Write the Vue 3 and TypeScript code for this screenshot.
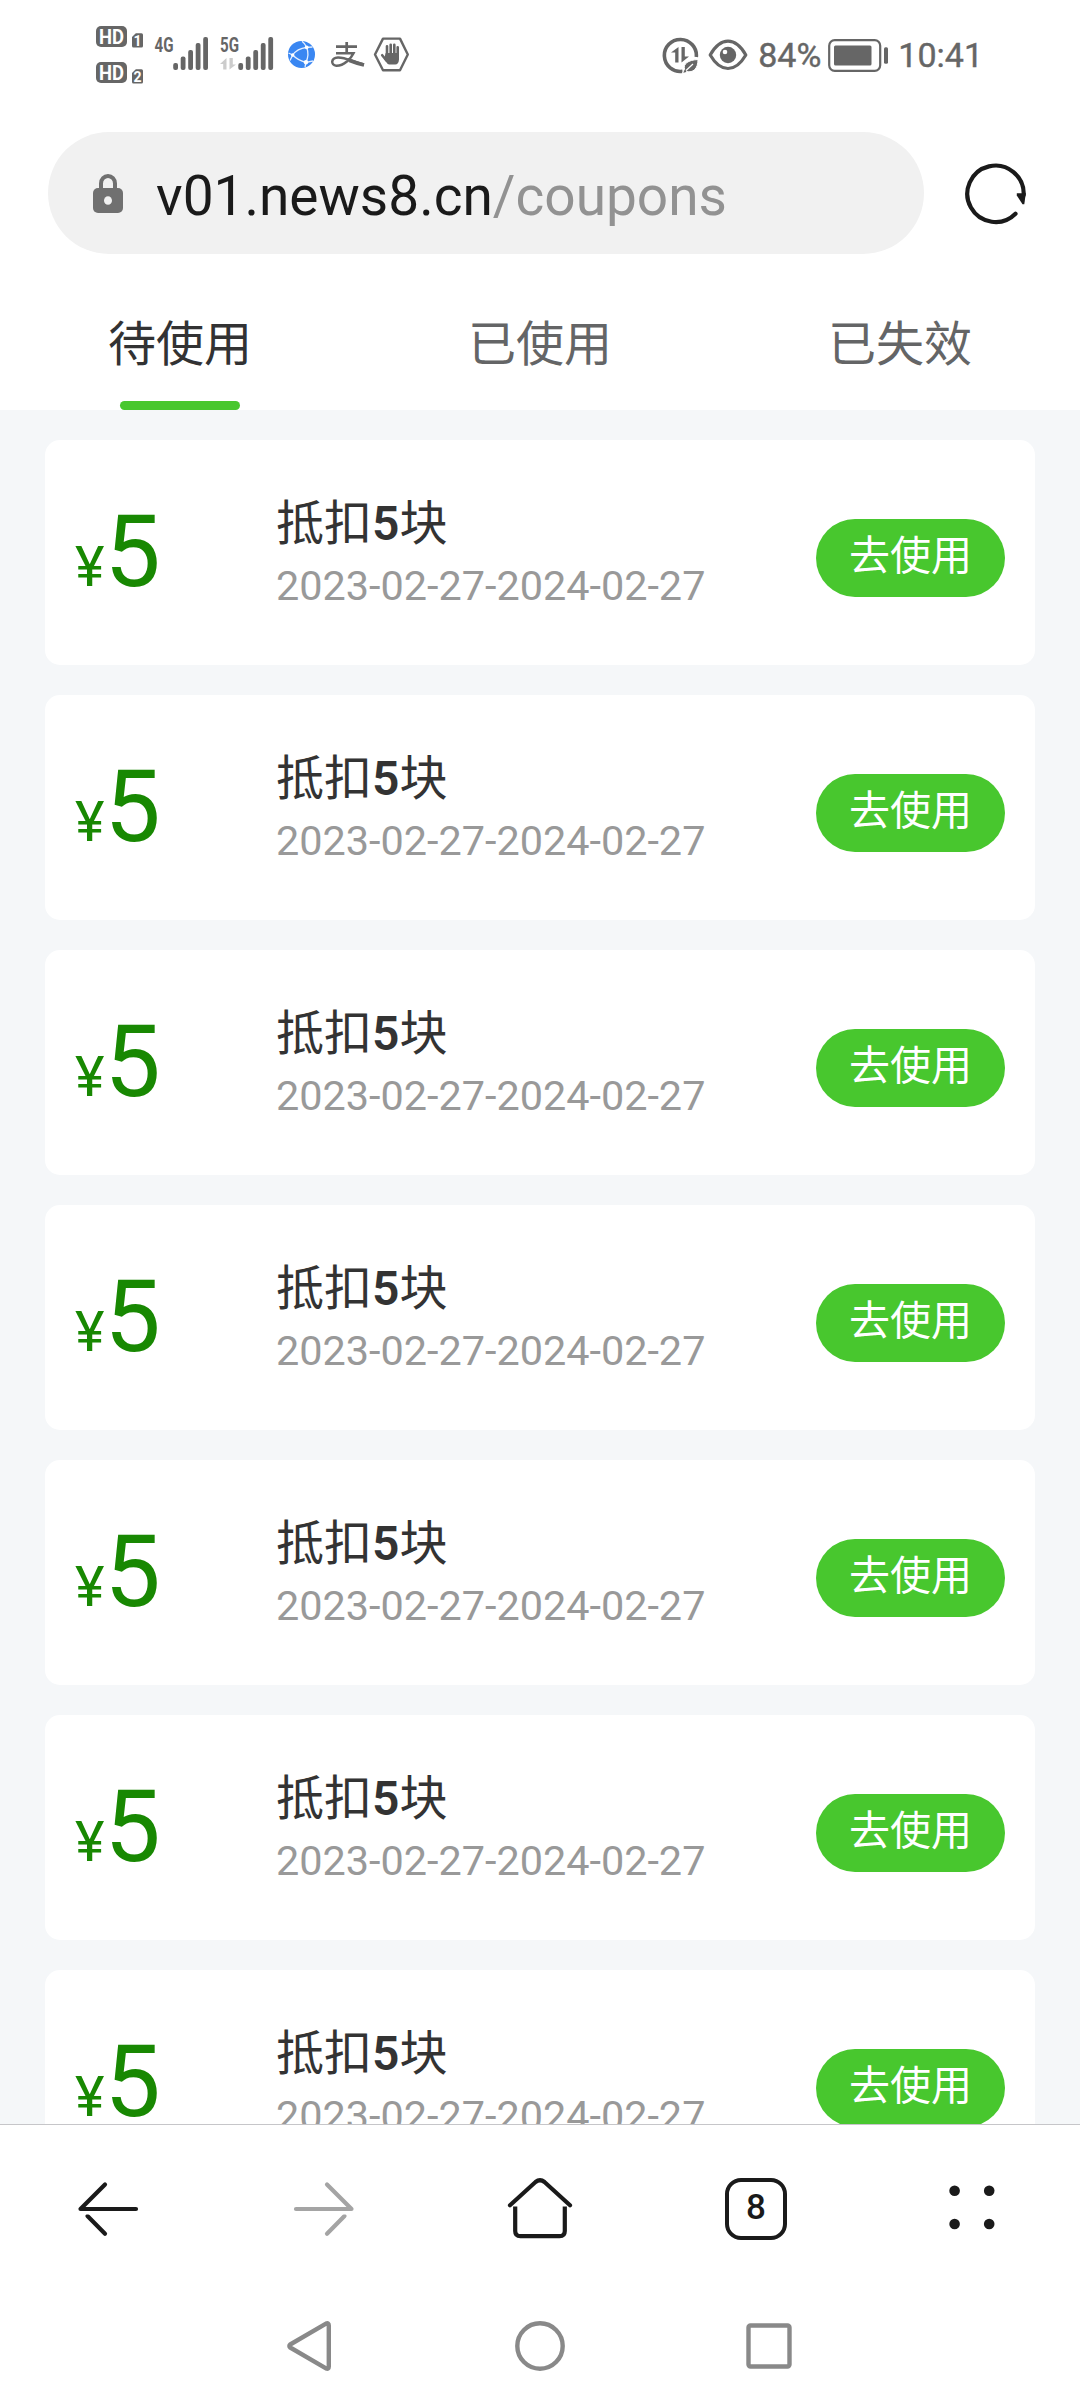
<script setup lang="ts">
interface Coupon {
  id: number
  amount: number
  title: string[]
  period: string
}

const tabs: string[] = ['待使用', '已使用', '已失效']
const activeTab = 0

const coupons: Coupon[] = Array.from({ length: 7 }, (_, i) => ({
  id: i,
  amount: 5,
  title: ['抵扣', '5', '块'],
  period: '2023-02-27-2024-02-27',
}))

// Signal bars: x offset and top edge of each bar
const bars = [
  { x: 0, y: 53 },
  { x: 7.5, y: 46.5 },
  { x: 15, y: 40 },
  { x: 22.5, y: 33 },
  { x: 30, y: 27 },
]
</script>

<template>
  <div class="screen">
    <header class="status">
      <svg class="status-left" width="340" height="90" viewBox="0 0 340 90">
        <g v-for="n in 2" :key="n" :transform="`translate(0 ${(n - 1) * 36})`">
          <rect x="16" y="16" width="31" height="21" rx="5" fill="#666" />
          <text x="19" y="33.5" class="hd" textLength="25" lengthAdjust="spacingAndGlyphs">HD</text>
          <path d="M53.5 37.5a1.500 1.500 0 0 1-1.500-1.500V27l3.800-3.800H61.500a1.500 1.500 0 0 1 1.500 1.500V36a1.500 1.500 0 0 1-1.500 1.500z" fill="#666" />
          <text x="57.5" y="35.7" class="sim">{{ n }}</text>
        </g>
        <text x="74.5" y="42" class="net" textLength="19" lengthAdjust="spacingAndGlyphs">4G</text>
        <text x="140" y="42" class="net" textLength="19" lengthAdjust="spacingAndGlyphs">5G</text>
        <g fill="#666">
          <rect v-for="b in bars" :key="'a' + b.x" :x="b.x + 93.2" :y="b.y" width="4.8" :height="60 - b.y" rx="2" />
          <rect v-for="b in bars" :key="'b' + b.x" :x="b.x + 158.3" :y="b.y" width="4.8" :height="60 - b.y" rx="2" />
        </g>
        <path d="M146.500 48v11.500h-3.300V54H140zM149.500 48v11.500l6.500-5h-3.200V48z" fill="#ccc" />

        <circle cx="221.500" cy="44.400" r="13.500" fill="#3a87f2" />
        <path d="M212.700 45Q217 38.500 226.700 37.300Q229.500 45 226 52.300Q218 50.500 212.700 45M226.700 37.300Q225 33.500 222 31.300M226.700 37.300L232.500 37M226 52.300L233 51M226 52.300L225 57M212.700 45L208.500 43M212.700 45L210 50.500" fill="none" stroke="#e6f0ff" stroke-width="1.300" />
        <g fill="#fff">
          <circle cx="226.700" cy="37.300" r="1.900" />
          <circle cx="212.700" cy="45" r="1.700" />
          <circle cx="226" cy="52.300" r="2.200" />
        </g>

        <g fill="none" stroke="#666">
          <path d="M256 36.700H277M266.700 32V43" stroke-width="2.700" />
          <path d="M256 43.200H273.500C271 48.500 264 56 256.300 55.800C250.500 55.200 250.700 47.700 258 47.400C266 47.300 273 52 284 54.500" stroke-width="2.500" />
          <path d="M269 50.300Q277 53.500 284 55" stroke-width="3.800" />
        </g>

        <path d="M303 28.600H320L327.800 44.500L320 60.200H303L295 44.500Z" fill="none" stroke="#666" stroke-width="2.400" stroke-linejoin="round" />
        <path d="M307 46V36.300M310.700 46V34.700M314.300 46V34.700M317.700 46V37.300M302.200 45.200l4 5" fill="none" stroke="#666" stroke-width="2.600" stroke-linecap="round" />
        <path d="M305.700 43H319V49.500Q318.600 54.500 315.200 54.500H309.200Q307.200 54 305.700 51.500L304 49z" fill="#666" />
      </svg>

      <div class="status-right">
        <svg width="37" height="37" viewBox="0 0 37 37">
          <path d="M20.500 34.300A16 16 0 1 1 34.300 20" fill="none" stroke="#666" stroke-width="3.600" />
          <path d="M16.500 10v15.500h-3.300V15.500H9zM19.500 10v15.500l7.500-6h-4.200V10z" fill="#666" />
          <path d="M36 22.500C26 23 21 27 22.500 32L20.500 36H23.500L24.500 34.500C31 36 36 32 36 22.500Z" fill="#666" stroke="#fff" stroke-width="1" />
          <path d="M24 33.500L31 27" stroke="#fff" stroke-width="1.200" />
        </svg>
        <svg class="eye" width="40" height="32" viewBox="0 0 40 32">
          <path d="M2.200 16Q10 2.200 20 2.200T37.800 16Q30 29.500 20 29.500T2.200 16Z" fill="none" stroke="#666" stroke-width="3.200" stroke-linejoin="round" />
          <circle cx="20" cy="16" r="8.200" fill="#666" />
          <circle cx="17" cy="13" r="2.300" fill="#fff" />
        </svg>
        <span class="percent">84%</span>
        <svg class="battery" width="61" height="33" viewBox="0 0 61 33">
          <rect x="1.200" y="1.200" width="51" height="30.600" rx="5.500" fill="none" stroke="#666" stroke-width="2.200" />
          <rect x="6" y="6.500" width="37.500" height="20" rx="1.500" fill="#666" />
          <rect x="56" y="8.300" width="4" height="16.500" rx="1.500" fill="#666" />
        </svg>
        <span class="clock">10:41</span>
      </div>
    </header>

    <div class="address-row">
      <div class="address">
        <svg width="30" height="39" viewBox="0 0 30 39">
          <path d="M8 16V9.500a7 7.500 0 0 1 14 0V16" fill="none" stroke="#707070" stroke-width="4" />
          <rect x="0" y="14" width="30" height="25" rx="5" fill="#707070" />
          <ellipse cx="15" cy="26.500" rx="4" ry="4.300" fill="#f1f1f1" />
        </svg>
        <span class="url">v01.news8.cn<span class="path">/coupons</span></span>
      </div>
      <svg class="reload" width="64" height="64" viewBox="0 0 64 64">
        <path d="M51.500 52.700A28.200 28.200 0 1 1 59.700 34" fill="none" stroke="#1a1a1a" stroke-width="4.200" stroke-linecap="round" />
        <path d="M52.800 32.200H61.800L60.300 43.300H58.500L52.800 34.500Z" fill="#1a1a1a" />
      </svg>
    </div>

    <nav class="tabs">
      <div v-for="(t, i) in tabs" :key="t" class="tab" :class="{ active: i === activeTab }">
        <span>{{ t }}</span>
      </div>
    </nav>

    <main class="list">
      <section v-for="c in coupons" :key="c.id" class="card">
        <div class="price"><span class="yen">¥</span><span class="amount">{{ c.amount }}</span></div>
        <div class="info">
          <div class="title">{{ c.title[0] }}<b>{{ c.title[1] }}</b>{{ c.title[2] }}</div>
          <div class="period">{{ c.period }}</div>
        </div>
        <button class="use" type="button">去使用</button>
      </section>
    </main>

    <nav class="toolbar">
      <div class="tool">
        <svg width="68" height="68" viewBox="0 0 68 68" fill="none" stroke="#1a1a1a" stroke-width="4.200" stroke-linecap="round" stroke-linejoin="round">
          <path d="M62 34H6.500L31 9.500" />
          <path d="M13.500 41L31 58.800" />
          <path d="M7 38.300H18" stroke="#fff" stroke-width="2.400" stroke-linecap="butt" />
        </svg>
      </div>
      <div class="tool">
        <svg width="68" height="68" viewBox="0 0 68 68" fill="none" stroke="#a4a4a4" stroke-width="4.200" stroke-linecap="round" stroke-linejoin="round">
          <path d="M6 34H61.500L37 9.500" />
          <path d="M54.500 41L37 58.800" />
          <path d="M50 38.300H61" stroke="#fff" stroke-width="2.400" stroke-linecap="butt" />
        </svg>
      </div>
      <div class="tool">
        <svg width="68" height="68" viewBox="0 0 68 68" fill="none" stroke="#1a1a1a" stroke-width="4.200">
          <path d="M4 30.300L29.500 7Q34 3.500 38.500 7L64 30.300" stroke-linecap="round" />
          <path d="M9.200 31.500V56Q9.200 61.200 14.400 61.200H53.600Q58.800 61.200 58.800 56V31.500" />
        </svg>
      </div>
      <div class="tool"><span class="count">8</span></div>
      <div class="tool">
        <svg width="68" height="68" viewBox="0 0 68 68" fill="#1a1a1a">
          <circle cx="16.600" cy="15.700" r="5.300" /><circle cx="51.200" cy="15.700" r="5.300" />
          <circle cx="16.600" cy="49" r="5.300" /><circle cx="51.200" cy="49" r="5.300" />
        </svg>
      </div>
    </nav>

    <footer class="system">
      <svg width="60" height="60" viewBox="0 0 60 60" fill="none" stroke="#898989" stroke-width="4.400" stroke-linejoin="round">
        <path d="M9.200 28.500L45 7.600Q47.800 6.500 47.800 9.500V50.500Q47.800 53.500 45 52.400L9.200 31.500Q7.500 30 9.200 28.500Z" />
      </svg>
      <svg width="60" height="60" viewBox="0 0 60 60" fill="none" stroke="#898989" stroke-width="4.400">
        <circle cx="30" cy="30" r="22.700" />
      </svg>
      <svg width="60" height="60" viewBox="0 0 60 60" fill="none" stroke="#898989" stroke-width="4.400">
        <rect x="9.500" y="9.500" width="41" height="41" rx="2" />
      </svg>
    </footer>
  </div>
</template>

<style>
body {
  margin: 0;
  background: #fff;
}
</style>

<style scoped>
.screen {
  width: 1080px;
  height: 2400px;
  display: flex;
  flex-direction: column;
  overflow: hidden;
  background: #fff;
  font-family: Roboto, "Noto Sans CJK SC", sans-serif;
}
svg {
  display: block;
  flex: none;
}
.status {
  height: 132px;
  flex: none;
  box-sizing: border-box;
  padding: 10px 97px 0 80px;
  display: flex;
  justify-content: space-between;
  align-items: flex-start;
}
.hd {
  font-size: 20px;
  font-weight: 700;
  fill: #fff;
}
.sim {
  font-size: 14px;
  font-weight: 700;
  fill: #fff;
  text-anchor: middle;
}
.net {
  font-size: 21px;
  font-weight: 700;
  fill: #666;
}
.status-right {
  height: 90px;
  display: flex;
  align-items: center;
  color: #666;
  font-size: 34px;
  line-height: 90px;
  -webkit-text-stroke: 0.4px #666;
}
.eye {
  margin-left: 9px;
}
.percent {
  margin-left: 10px;
}
.battery {
  margin-left: 7px;
}
.clock {
  margin-left: 9px;
}
.address-row {
  height: 122px;
  flex: none;
  display: flex;
  align-items: center;
  padding-left: 48px;
}
.address {
  width: 876px;
  height: 122px;
  box-sizing: border-box;
  padding-left: 45px;
  border-radius: 61px;
  background: #f1f1f1;
  display: flex;
  align-items: center;
}
.url {
  margin-left: 33px;
  padding-top: 6px;
  font-size: 55px;
  line-height: 116px;
  color: #1a1a1a;
  white-space: nowrap;
}
.path {
  color: #929292;
}
.reload {
  margin-left: 40px;
}
.tabs {
  height: 156px;
  flex: none;
  display: flex;
}
.tab {
  flex: 1;
  display: flex;
  flex-direction: column;
  align-items: center;
  justify-content: space-between;
  font-size: 48px;
  color: #646566;
}
.tab span {
  padding-top: 41px;
  line-height: 100px;
}
.tab.active {
  color: #323233;
}
.tab.active::after {
  content: "";
  width: 120px;
  height: 9px;
  border-radius: 5px;
  background: #48c72e;
}
.list {
  flex: none;
  height: 1714px;
  box-sizing: border-box;
  padding: 30px 45px 0;
  background: #f5f7f9;
  overflow: hidden;
}
.card {
  height: 225px;
  margin-bottom: 30px;
  box-sizing: border-box;
  padding: 0 30px;
  border-radius: 15px;
  background: #fff;
  display: flex;
  align-items: flex-start;
}
.price {
  width: 201px;
  flex: none;
  padding-top: 62px;
  display: flex;
  align-items: baseline;
  color: #188802;
  line-height: 100px;
}
.yen {
  font-size: 56px;
}
.amount {
  font-size: 100px;
}
.info {
  flex: 1;
  padding-top: 51px;
}
.title {
  font-size: 48px;
  line-height: 66px;
  color: #333;
}
.title b {
  font-weight: 600;
}
.period {
  font-size: 41.4px;
  line-height: 58px;
  color: #999;
}
.use {
  width: 189px;
  height: 78px;
  margin: 79px 0 0;
  padding: 0 0 3px;
  border: 0;
  border-radius: 39px;
  background: #48c72e;
  color: #fff;
  font: 400 41px/75px Roboto, "Noto Sans CJK SC", sans-serif;
}
.toolbar {
  height: 170px;
  flex: none;
  box-sizing: border-box;
  border-top: 1px solid #c6c6c9;
  padding-bottom: 1px;
  display: flex;
  align-items: center;
}
.tool {
  flex: 1;
  display: flex;
  justify-content: center;
}
.count {
  width: 62px;
  height: 62px;
  box-sizing: border-box;
  border: 4px solid #1a1a1a;
  border-radius: 16px;
  text-align: center;
  font-size: 35px;
  line-height: 51px;
  font-weight: 500;
  color: #1a1a1a;
}
.system {
  height: 106px;
  flex: none;
  display: flex;
  justify-content: center;
  align-items: flex-start;
  gap: 169px;
  padding-top: 22px;
}
</style>
